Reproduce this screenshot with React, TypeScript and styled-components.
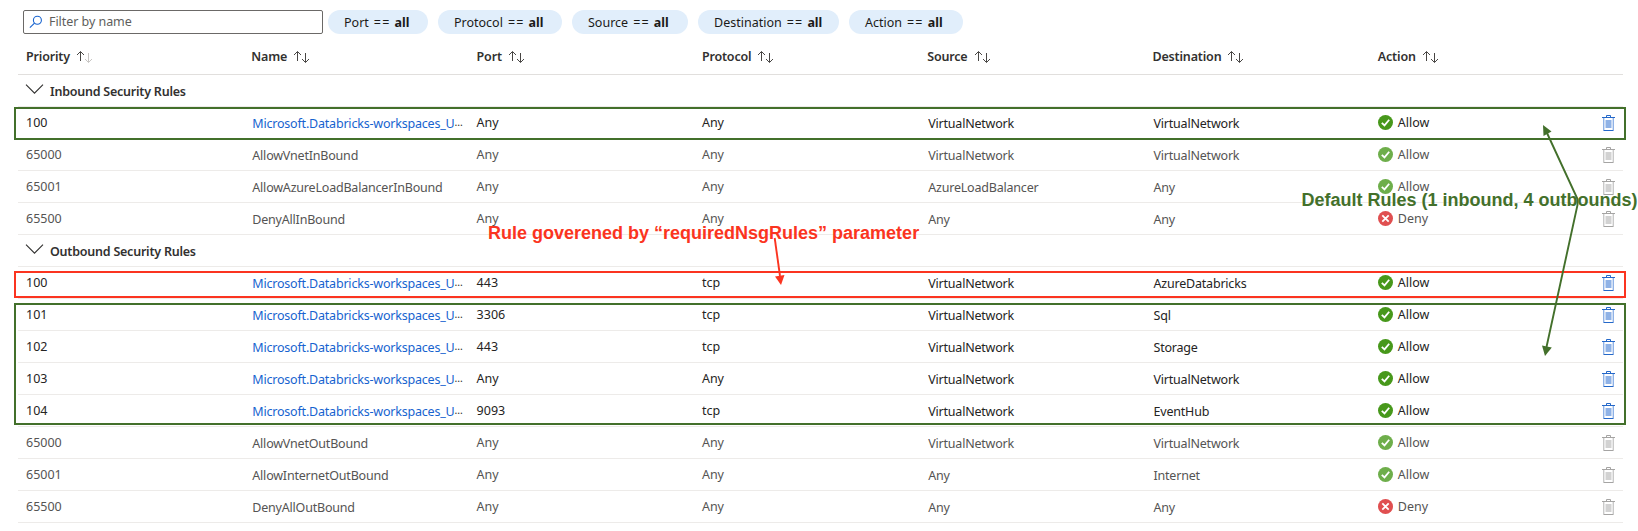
import React from 'react';
import styled, { createGlobalStyle } from 'styled-components';

const Global = createGlobalStyle`
  * { box-sizing: border-box; }
  body { margin: 0; background: #fff; font-family: "Noto Sans", "Open Sans", sans-serif; font-size: 12.5px; color: #323130; }
`;

const Page = styled.div`
  position: relative;
  width: 1638px;
  height: 531px;
  overflow: hidden;
  padding: 10px 15px 0 18px;
`;

const Toolbar = styled.div`
  display: flex;
  align-items: center;
  height: 24px;
  padding-left: 5px;
`;

const FilterBox = styled.div`
  display: flex;
  align-items: center;
  width: 300px;
  height: 24px;
  margin-right: 5px;
  padding-left: 5px;
  border: 1px solid #6b6967;
  border-radius: 2px;
  color: #605e5c;
`;

const FilterText = styled.span`
  margin-left: 6px;
  line-height: 20px;
  letter-spacing: -0.05px;
`;

const Pills = styled.div`
  display: flex;
  gap: 10px;
`;

const Pill = styled.div<{ $w: number }>`
  width: ${(p) => p.$w}px;
  height: 24px;
  padding-left: 16px;
  border-radius: 12px;
  background: #e1eefb;
  color: #1b1a19;
  line-height: 25px;
  white-space: pre;
`;

const Operator = styled.span`
  margin: 0 4px 0 5px;
  letter-spacing: 1.2px;
`;

const HeaderRow = styled.div`
  display: grid;
  grid-template-columns: repeat(7, 225.3px);
  height: 41px;
  border-bottom: 1px solid #e1dfdd;
  padding-left: 8px;
`;

const HeaderCell = styled.div`
  display: flex;
  align-items: center;
  gap: 6px;
  height: 45px;
  font-weight: 600;
  letter-spacing: -0.17px;
`;

const GroupRow = styled.div`
  display: flex;
  align-items: center;
  gap: 6px;
  height: 32px;
  padding: 1px 0 0 7px;
  border-bottom: 1px solid #edebe9;
  font-weight: 600;
`;

const GroupTitle = styled.span`
  letter-spacing: -0.23px;
`;

const Row = styled.div<{ $muted?: boolean }>`
  display: grid;
  grid-template-columns: repeat(6, 225.3px) 1fr 21px;
  align-items: center;
  height: 32px;
  padding-left: 8px;
  border-bottom: 1px solid #edebe9;
  color: ${(p) => (p.$muted ? '#555453' : '#252423')};
`;

const Cell = styled.div<{ $link?: boolean; $low?: boolean }>`
  padding-top: ${(p) => (p.$low ? 2 : 0)}px;
  padding-left: ${(p) => (p.$low ? 1 : 0)}px;
  color: ${(p) => (p.$link ? '#1763cf' : 'inherit')};
  letter-spacing: ${(p) => (p.$low ? '-0.2px' : 'normal')};
  white-space: nowrap;
`;

const ActionCell = styled.div`
  display: flex;
  align-items: center;
  gap: 5px;
`;

const Dots = styled.span`
  display: inline-block;
  transform: translateY(-2px);
  font-size: 10.5px;
  color: #323130;
`;

const HighlightBox = styled.div<{ $top: number; $h: number; $color: string }>`
  position: absolute;
  left: 14px;
  top: ${(p) => p.$top}px;
  width: 1612px;
  height: ${(p) => p.$h}px;
  border: 2px solid ${(p) => p.$color};
`;

const Note = styled.div<{ $x: number; $y: number; $color: string }>`
  position: absolute;
  left: ${(p) => p.$x}px;
  top: ${(p) => p.$y}px;
  color: ${(p) => p.$color};
  font: bold 18px/20px "Liberation Sans", Arial, sans-serif;
  white-space: nowrap;
`;

const Arrows = styled.svg`
  position: absolute;
  left: 0;
  top: 0;
`;

const GREEN = '#43702b';
const RED = '#fb3420';

const SearchIcon = () => (
  <svg width="14" height="14" viewBox="0 0 14 14" fill="none" stroke="#1763cf" strokeWidth="1.1">
    <circle cx="8.4" cy="5.2" r="4" />
    <path d="M5.5 8.1 0.9 12.7" />
  </svg>
);

const SortIcon = ({ dim }: { dim?: boolean }) => (
  <svg width="17" height="14" viewBox="0 0 17 14" fill="none" strokeWidth="1">
    <path stroke="#484644" d="M4.5 11V1.7M1 5l3.5-3.5L8 5" />
    <path stroke={dim ? '#c8c6c4' : '#484644'} d="M12.5 3v9.3M9 9l3.5 3.5L16 9" />
  </svg>
);

const Chevron = () => (
  <svg width="19" height="14" viewBox="0 0 19 14" fill="none" stroke="#323130" strokeWidth="1.1">
    <path d="M1 0.7 9.5 9.2 18 0.7" />
  </svg>
);

const StatusIcon = ({ deny, muted }: { deny?: boolean; muted?: boolean }) => (
  <svg width="15" height="15" viewBox="0 0 15 15" fill="none">
    <circle cx="7.5" cy="7.5" r="7.5" fill={deny ? '#e04f50' : muted ? '#6eae4b' : '#47981b'} />
    <path stroke="#fff" strokeWidth="1.8" d={deny ? 'M4.3 4.3l6.4 6.4M10.7 4.3l-6.4 6.4' : 'M3.8 7.8 6.5 10.4 11.2 4.7'} />
  </svg>
);

const TrashIcon = ({ muted }: { muted?: boolean }) => {
  const line = muted ? '#a5a4a3' : '#2468c9';
  const soft = muted ? '#c9c9c9' : '#8fb2e6';
  return (
    <svg width="13" height="16" viewBox="0 0 13 16" fill="none">
      <path stroke={soft} strokeWidth="1.4" d="M1.7 2.5v12.8M11.3 2.5v12.8" />
      <path fill={muted ? '#d2d2d2' : '#8fb2e6'} d="M3.5 5h6v8h-6z" />
      <path stroke={line} d="M0 2.5h13M1.5 15.5h10" />
      <path stroke={line} d="M4.5 2V.5h4V2" />
    </svg>
  );
};

type Rule = [string, string, string, string, string, string, 'Allow' | 'Deny', boolean];

const WORKSPACE = 'Microsoft.Databricks-workspaces_U';
const VNET = 'VirtualNetwork';

const inbound: Rule[] = [
  ['100', WORKSPACE, 'Any', 'Any', VNET, VNET, 'Allow', false],
  ['65000', 'AllowVnetInBound', 'Any', 'Any', VNET, VNET, 'Allow', true],
  ['65001', 'AllowAzureLoadBalancerInBound', 'Any', 'Any', 'AzureLoadBalancer', 'Any', 'Allow', true],
  ['65500', 'DenyAllInBound', 'Any', 'Any', 'Any', 'Any', 'Deny', true],
];

const outbound: Rule[] = [
  ['100', WORKSPACE, '443', 'tcp', VNET, 'AzureDatabricks', 'Allow', false],
  ['101', WORKSPACE, '3306', 'tcp', VNET, 'Sql', 'Allow', false],
  ['102', WORKSPACE, '443', 'tcp', VNET, 'Storage', 'Allow', false],
  ['103', WORKSPACE, 'Any', 'Any', VNET, VNET, 'Allow', false],
  ['104', WORKSPACE, '9093', 'tcp', VNET, 'EventHub', 'Allow', false],
  ['65000', 'AllowVnetOutBound', 'Any', 'Any', VNET, VNET, 'Allow', true],
  ['65001', 'AllowInternetOutBound', 'Any', 'Any', 'Any', 'Internet', 'Allow', true],
  ['65500', 'DenyAllOutBound', 'Any', 'Any', 'Any', 'Any', 'Deny', true],
];

const pills: [string, number][] = [
  ['Port', 100],
  ['Protocol', 124],
  ['Source', 116],
  ['Destination', 141],
  ['Action', 114],
];

const headers = ['Priority', 'Name', 'Port', 'Protocol', 'Source', 'Destination', 'Action'];

const RuleRow = ({ rule }: { rule: Rule }) => {
  const [priority, name, port, protocol, source, destination, action, muted] = rule;
  return (
    <Row $muted={muted}>
      <Cell>{priority}</Cell>
      <Cell $link={!muted} $low>
        {name}
        {!muted && <Dots>…</Dots>}
      </Cell>
      <Cell>{port}</Cell>
      <Cell>{protocol}</Cell>
      <Cell $low>{source}</Cell>
      <Cell $low>{destination}</Cell>
      <ActionCell>
        <StatusIcon deny={action === 'Deny'} muted={muted} />
        <span>{action}</span>
      </ActionCell>
      <TrashIcon muted={muted} />
    </Row>
  );
};

const Group = ({ title, rules }: { title: string; rules: Rule[] }) => (
  <section>
    <GroupRow>
      <Chevron />
      <GroupTitle>{title}</GroupTitle>
    </GroupRow>
    {rules.map((rule) => (
      <RuleRow key={rule[0]} rule={rule} />
    ))}
  </section>
);

export default function App() {
  return (
    <Page>
      <Global />
      <Toolbar>
        <FilterBox>
          <SearchIcon />
          <FilterText>Filter by name</FilterText>
        </FilterBox>
        <Pills>
          {pills.map(([label, w]) => (
            <Pill key={label} $w={w}>
              {label}
              <Operator>==</Operator>
              <b>all</b>
            </Pill>
          ))}
        </Pills>
      </Toolbar>
      <HeaderRow>
        {headers.map((h, i) => (
          <HeaderCell key={h}>
            {h}
            <SortIcon dim={i === 0} />
          </HeaderCell>
        ))}
      </HeaderRow>
      <Group title="Inbound Security Rules" rules={inbound} />
      <Group title="Outbound Security Rules" rules={outbound} />
      <HighlightBox $top={107} $h={33} $color={GREEN} />
      <HighlightBox $top={271} $h={27} $color={RED} />
      <HighlightBox $top={303} $h={122} $color={GREEN} />
      <Note $x={488} $y={223} $color={RED}>Rule goverened by “requiredNsgRules” parameter</Note>
      <Note $x={1301.5} $y={190} $color={GREEN}>Default Rules (1 inbound, 4 outbounds)</Note>
      <Arrows width="1638" height="531" fill="none" strokeWidth="1.9">
        <path stroke={RED} d="M774.7 238 780 276" />
        <path fill={RED} d="M775 276.5 784.5 275 781 285z" />
        <path stroke={GREEN} d="M1547 133 1577.5 199V205L1546.500 347" />
        <path fill={GREEN} d="M1543 125 1551.500 131.500 1543.500 136z" />
        <path fill={GREEN} d="M1542 345.500 1551.800 347.500 1545 356z" />
      </Arrows>
    </Page>
  );
}
